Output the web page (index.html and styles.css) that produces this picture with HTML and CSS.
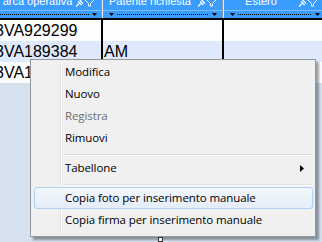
FILE: index.html
```html
<!DOCTYPE html>
<html>
<head>
<meta charset="utf-8">
<link rel="stylesheet" href="styles.css">
</head>
<body>
<div class="grid">
  <div class="header">
    <div class="hcell c1">
      <div class="title"><span class="label">arca operativa</span>
        <svg class="icons" width="20" height="8" viewBox="0 0 20 8"><path d="M1 7.5 L4.5 4 M3 2.5 L6.5 6 M4.5 1 L8 4.5 M5 1.5 L7.5 4" stroke="#fff" stroke-width="1.2" fill="none"/><path d="M9.5 0.5 H19.5 L15.5 4.5 V7 H13.5 V4.5 Z" stroke="#fff" stroke-width="1" fill="none"/></svg>
      </div>
      <div class="filter"><span class="dots"></span><svg class="tri" width="5" height="3" viewBox="0 0 5 3"><path d="M0 0 H5 L2.5 3 Z" fill="#000"/></svg></div>
    </div>
    <div class="hsep"></div>
    <div class="hcell c2">
      <div class="title"><span class="label">Patente richiesta</span>
        <svg class="icons" width="20" height="8" viewBox="0 0 20 8"><path d="M1 7.5 L4.5 4 M3 2.5 L6.5 6 M4.5 1 L8 4.5 M5 1.5 L7.5 4" stroke="#fff" stroke-width="1.2" fill="none"/><path d="M9.5 0.5 H19.5 L15.5 4.5 V7 H13.5 V4.5 Z" stroke="#fff" stroke-width="1" fill="none"/></svg>
      </div>
      <div class="filter lead"><svg class="tri" width="5" height="3" viewBox="0 0 5 3"><path d="M0 0 H5 L2.5 3 Z" fill="#000"/></svg><span class="dots"></span><svg class="tri" width="5" height="3" viewBox="0 0 5 3"><path d="M0 0 H5 L2.5 3 Z" fill="#000"/></svg></div>
    </div>
    <div class="hsep"></div>
    <div class="hcell c3">
      <div class="title"><span class="label">Estero</span>
        <svg class="icons" width="20" height="8" viewBox="0 0 20 8"><path d="M1 7.5 L4.5 4 M3 2.5 L6.5 6 M4.5 1 L8 4.5 M5 1.5 L7.5 4" stroke="#fff" stroke-width="1.2" fill="none"/><path d="M9.5 0.5 H19.5 L15.5 4.5 V7 H13.5 V4.5 Z" stroke="#fff" stroke-width="1" fill="none"/></svg>
      </div>
      <div class="filter lead"><svg class="tri" width="5" height="3" viewBox="0 0 5 3"><path d="M0 0 H5 L2.5 3 Z" fill="#000"/></svg><span class="dots"></span><svg class="tri" width="5" height="3" viewBox="0 0 5 3"><path d="M0 0 H5 L2.5 3 Z" fill="#000"/></svg></div>
    </div>
  </div>
  <div class="row odd">
    <div class="cell c1"><span class="clip">3VA929299</span></div><div class="vsep"></div><div class="cell c2"></div><div class="vsep"></div><div class="cell c3"></div>
  </div>
  <div class="row even">
    <div class="cell c1"><span class="clip">3VA189384</span></div><div class="vsep"></div><div class="cell c2">AM</div><div class="vsep"></div><div class="cell c3"></div>
  </div>
  <div class="row odd">
    <div class="cell c1"><span class="clip">3VA1</span></div><div class="vsep"></div><div class="cell c2"></div><div class="vsep"></div><div class="cell c3"></div>
  </div>
</div>

<div class="menu">
  <div class="item">Modifica</div>
  <div class="item">Nuovo</div>
  <div class="item disabled">Registra</div>
  <div class="item">Rimuovi</div>
  <div class="sep"></div>
  <div class="item sub">Tabellone<svg class="arrow" width="4" height="7" viewBox="0 0 4 7"><path d="M0 0 L4 3.5 L0 7 Z" fill="#000"/></svg></div>
  <div class="sep"></div>
  <div class="item hover">Copia foto per inserimento manuale</div>
  <div class="item">Copia firma per inserimento manuale</div>
</div>
<div class="handle"></div>
</body>
</html>
```
FILE: styles.css
```css
html, body {
  margin: 0;
  padding: 0;
}
body {
  width: 322px;
  height: 242px;
  overflow: hidden;
  background: #d5e1ee;
  position: relative;
  font-family: "Liberation Sans", Arial, sans-serif;
}
.grid {
  width: 322px;
}
.header {
  display: grid;
  grid-template-columns: 101px 2px 119px 2px 98px;
  height: 18px;
  background: #3a9cfc;
  border-bottom: 2px solid #000;
}
.hcell {
  display: flex;
  flex-direction: column;
  overflow: hidden;
}
.hsep {
  background: linear-gradient(to right, #8d98a3 0 1px, #e6e6e6 1px 2px);
}
.title {
  height: 11px;
  border-bottom: 1px solid #7fbcfa;
  display: flex;
  align-items: flex-start;
  overflow: hidden;
  box-sizing: border-box;
}
.label {
  flex: 1;
  text-align: center;
  color: #fff;
  font-size: 11px;
  line-height: 11px;
  margin-top: -4px;
  white-space: nowrap;
}
.icons {
  flex: none;
  margin-top: -1px;
}
.c1 .icons { margin-right: 6px; }
.c2 .icons { margin-right: 5px; }
.c3 .icons { margin-right: 4px; }
.filter {
  height: 7px;
  display: flex;
  align-items: center;
  gap: 3px;
  padding-right: 4px;
}
.filter.lead {
  padding-left: 6px;
}
.c3 .filter { padding-right: 2px; }
.c2 .filter { padding-right: 5px; }
.dots {
  flex: 1;
  height: 1px;
  background: repeating-linear-gradient(to right, #000 0 1px, transparent 1px 2px);
}
.tri {
  flex: none;
  display: block;
}
.row {
  display: grid;
  grid-template-columns: 101px 2px 119px 2px 98px;
  height: 21px;
}
.row.odd { background: #fcfdff; }
.row.even { background: #dfe9fc; }
.vsep { background: #000; }
.cell {
  font-size: 16px;
  line-height: 21px;
  color: #000;
  overflow: hidden;
  white-space: nowrap;
}
.cell.c2 { padding-left: 1px; }
.clip {
  display: inline-block;
  margin-left: -5px;
}
.menu {
  position: absolute;
  left: 30px;
  top: 59px;
  width: 284px;
  height: 173px;
  border: 1px solid #979797;
  background: #f0f0f0;
  box-shadow: 3px 3px 2px rgba(40, 50, 60, 0.45);
  padding: 1px 0 2px;
  box-sizing: content-box;
  font-family: "Open Sans", "Noto Sans", sans-serif;
  font-size: 11.5px;
  color: #000;
}
.menu::before {
  content: "";
  position: absolute;
  left: 29px;
  top: 1px;
  bottom: 2px;
  width: 2px;
  background: linear-gradient(to right, #e2e3e3 0 1px, #fff 1px 2px);
}
.item {
  position: relative;
  height: 22px;
  line-height: 22px;
  padding-left: 31px;
  margin: 0 2px 0 3px;
  box-sizing: border-box;
  white-space: nowrap;
  letter-spacing: -0.1px;
}
.item.disabled { color: #6d6d6d; }
.item.sub {
  display: flex;
  align-items: center;
}
.arrow {
  margin-left: auto;
  margin-right: 9px;
}
.item.hover {
  border: 1px solid #aed0f5;
  border-radius: 3px;
  background: linear-gradient(#f3f7fc, #e4edf8);
  padding-left: 30px;
  line-height: 20px;
}
.sep {
  height: 8px;
  margin-left: 32px;
  margin-right: 3px;
  background: linear-gradient(to bottom, transparent 0 5px, #e0e0e0 5px 6px, #fff 6px 7px, transparent 7px);
}
.handle {
  position: absolute;
  left: 158px;
  top: 237px;
  width: 3px;
  height: 3px;
  border: 1px solid #333;
  background: #fff;
}
```
